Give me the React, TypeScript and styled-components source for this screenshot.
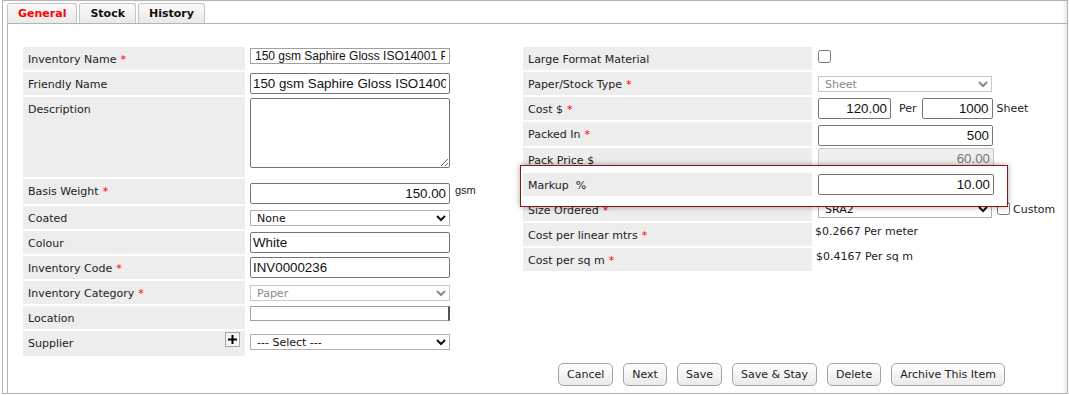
import styled, { createGlobalStyle } from "styled-components";

const GlobalStyle = createGlobalStyle`
  html, body {
    margin: 0;
    padding: 0;
    background: #fff;
  }
  body {
    font-family: "DejaVu Sans", Tahoma, sans-serif;
    font-size: 11px;
    color: #222;
  }
`;

const Frame = styled.div`
  box-sizing: border-box;
  width: 1066px;
  height: 394px;
  margin-left: 2px;
  border: 1px solid #b4b4b4;
  padding: 2px 0 0 4px;
  display: flex;
  flex-direction: column;
  box-shadow: inset -4px 0 5px -3px rgba(0, 0, 0, 0.15);
`;

const TabBar = styled.div`
  display: flex;
  gap: 2px;
  height: 20px;
`;

const Tab = styled.div<{ $active?: boolean }>`
  box-sizing: border-box;
  height: 20px;
  padding: 0 10px;
  display: flex;
  align-items: center;
  border: 1px solid #c4c4c4;
  border-bottom: none;
  border-radius: 3px 3px 0 0;
  background: linear-gradient(#fbfbfb, #e9e9e9);
  font-weight: bold;
  color: ${(p) => (p.$active ? "#f00" : "#111")};
`;

const Panel = styled.div`
  flex: 1;
  border-top: 1px solid #b4b4b4;
  border-left: 1px solid #b4b4b4;
  padding: 23px 0 0 15px;
  display: flex;
  flex-direction: column;
`;

const Columns = styled.div`
  display: flex;
`;

const Col = styled.div<{ $w: number }>`
  width: ${(p) => p.$w}px;
  display: flex;
  flex-direction: column;
  gap: 2px;
`;

const Row = styled.div<{ $label: number; $h?: number; $gap: number }>`
  display: grid;
  grid-template-columns: ${(p) => p.$label}px 1fr;
  column-gap: ${(p) => p.$gap}px;
  height: ${(p) => p.$h ?? 23}px;
`;

const HighlightRow = styled(Row)`
  position: relative;
  z-index: 1;

  &::before {
    content: "";
    position: absolute;
    z-index: -1;
    left: -3px;
    top: -8px;
    width: 486px;
    bottom: -11px;
    background: #fff;
    border: 1px solid #8f1515;
    box-shadow: 0 0 6px rgba(0, 0, 0, 0.35);
  }
`;

const Label = styled.div`
  box-sizing: border-box;
  background: #ededed;
  padding: 6px 5px 0;
  display: flex;
  justify-content: space-between;
  align-items: flex-start;
  white-space: pre;
`;

const Req = styled.span`
  color: #f00;
  margin-left: 4px;
`;

const Field = styled.div<{ $top?: number }>`
  display: flex;
  align-items: flex-start;
  padding-top: ${(p) => p.$top ?? 1}px;
  white-space: nowrap;
`;

const TextInput = styled.input<{ $w?: number; $right?: boolean }>`
  box-sizing: border-box;
  width: ${(p) => p.$w ?? 200}px;
  height: 21px;
  margin: 0;
  padding: 0 3px 0 2px;
  border: 1px solid #767676;
  border-radius: 2px;
  background: #fff;
  font-family: "Liberation Sans", Arial, sans-serif;
  font-size: 13.33px;
  color: #111;
  text-align: ${(p) => (p.$right ? "right" : "left")};
  outline: none;

  &:read-only {
    background: #efefef;
    border-color: #c8c8c8;
    color: #777;
  }
`;

const SlimInput = styled.input<{ $edge?: boolean }>`
  box-sizing: border-box;
  width: 200px;
  height: ${(p) => (p.$edge ? 15 : 16)}px;
  margin: 0;
  padding: 0 4px;
  border: 1px solid #a0a0a0;
  border-right: ${(p) => (p.$edge ? "2px solid #555" : "1px solid #a0a0a0")};
  border-radius: 0;
  font-family: "Liberation Sans", Arial, sans-serif;
  font-size: 12px;
  color: #111;
  outline: none;
`;

const TextArea = styled.textarea`
  box-sizing: border-box;
  width: 200px;
  height: 70px;
  margin: 0;
  border: 1px solid #767676;
  border-radius: 2px;
  font-family: "Liberation Sans", Arial, sans-serif;
  font-size: 13.33px;
  outline: none;
`;

const Select = styled.select<{ $w?: number; $h?: number }>`
  box-sizing: border-box;
  width: ${(p) => p.$w ?? 200}px;
  height: ${(p) => p.$h ?? 16}px;
  margin: 0;
  padding: 0 0 0 2px;
  border: 1px solid #b0b0b0;
  border-radius: 0;
  background-color: #fff;
  font-family: "DejaVu Sans", Tahoma, sans-serif;
  font-size: 11px;
  color: #111;

  &:disabled {
    color: #8a8a8a;
    border-color: #c8c8c8;
    opacity: 1;
  }
`;

const Check = styled.input<{ $ml?: number; $mt?: number }>`
  width: 13px;
  height: 13px;
  margin: ${(p) => p.$mt ?? 0}px 0 0 ${(p) => p.$ml ?? 0}px;
`;

const SmallUnit = styled.span`
  font-family: "Liberation Sans", Arial, sans-serif;
  font-size: 11px;
  margin: 1px 0 0 5px;
`;

const InlineText = styled.span<{ $ml: number; $mt?: number }>`
  margin-left: ${(p) => p.$ml}px;
  margin-top: ${(p) => p.$mt ?? 4}px;
`;

const PlusButton = styled.span`
  box-sizing: border-box;
  width: 15px;
  height: 15px;
  margin: -5px 0 0 0;
  border: 1px solid #a8a8a8;
  background: #f4f4f4;
  display: flex;
  align-items: center;
  justify-content: center;
`;

const ButtonRow = styled.div`
  display: flex;
  gap: 10px;
  margin: 7px 0 0 535px;
`;

const Button = styled.button`
  box-sizing: border-box;
  height: 23px;
  padding: 0 8px;
  border: 1px solid #a4a4a4;
  border-radius: 5px;
  background: linear-gradient(#ffffff, #eaeaea);
  font-family: "DejaVu Sans", Tahoma, sans-serif;
  font-size: 11px;
  color: #222;
`;

const Plus = () => (
  <svg width="9" height="9" viewBox="0 0 9 9">
    <rect x="3.5" y="0" width="2" height="9" fill="#000" />
    <rect x="0" y="3.5" width="9" height="2" fill="#000" />
  </svg>
);

const L = ({ text, req }: { text: string; req?: boolean }) => (
  <span>
    {text}
    {req && <Req>*</Req>}
  </span>
);

const App = () => {
  const left = { $label: 222, $gap: 5 };
  const right = { $label: 289, $gap: 6 };

  return (
    <>
      <GlobalStyle />
      <Frame>
        <TabBar>
          <Tab $active>General</Tab>
          <Tab>Stock</Tab>
          <Tab>History</Tab>
        </TabBar>
        <Panel>
          <Columns>
            <Col $w={500}>
              <Row {...left}>
                <Label><L text="Inventory Name" req /></Label>
                <Field>
                  <SlimInput defaultValue="150 gsm Saphire Gloss ISO14001 Paper" />
                </Field>
              </Row>
              <Row {...left}>
                <Label><L text="Friendly Name" /></Label>
                <Field>
                  <TextInput defaultValue="150 gsm Saphire Gloss ISO14001 Paper" />
                </Field>
              </Row>
              <Row {...left} $h={80}>
                <Label><L text="Description" /></Label>
                <Field>
                  <TextArea />
                </Field>
              </Row>
              <Row {...left} $h={25}>
                <Label><L text="Basis Weight" req /></Label>
                <Field $top={4}>
                  <TextInput $right defaultValue="150.00" />
                  <SmallUnit>gsm</SmallUnit>
                </Field>
              </Row>
              <Row {...left}>
                <Label><L text="Coated" /></Label>
                <Field $top={4}>
                  <Select defaultValue="None">
                    <option>None</option>
                  </Select>
                </Field>
              </Row>
              <Row {...left}>
                <Label><L text="Colour" /></Label>
                <Field>
                  <TextInput defaultValue="White" />
                </Field>
              </Row>
              <Row {...left}>
                <Label><L text="Inventory Code" req /></Label>
                <Field>
                  <TextInput defaultValue="INV0000236" />
                </Field>
              </Row>
              <Row {...left}>
                <Label><L text="Inventory Category" req /></Label>
                <Field $top={4}>
                  <Select disabled defaultValue="Paper">
                    <option>Paper</option>
                  </Select>
                </Field>
              </Row>
              <Row {...left}>
                <Label><L text="Location" /></Label>
                <Field $top={0}>
                  <SlimInput $edge />
                </Field>
              </Row>
              <Row {...left} $h={25}>
                <Label>
                  <L text="Supplier" />
                  <PlusButton><Plus /></PlusButton>
                </Label>
                <Field $top={3}>
                  <Select defaultValue="--- Select ---">
                    <option>--- Select ---</option>
                  </Select>
                </Field>
              </Row>
            </Col>

            <Col $w={540}>
              <Row {...right}>
                <Label><L text="Large Format Material" /></Label>
                <Field $top={3}>
                  <Check type="checkbox" />
                </Field>
              </Row>
              <Row {...right}>
                <Label><L text="Paper/Stock Type" req /></Label>
                <Field $top={4}>
                  <Select $w={174} disabled defaultValue="Sheet">
                    <option>Sheet</option>
                  </Select>
                </Field>
              </Row>
              <Row {...right}>
                <Label><L text="Cost $" req /></Label>
                <Field>
                  <TextInput $w={73} $right defaultValue="120.00" />
                  <InlineText $ml={8}>Per</InlineText>
                  <TextInput $w={71} $right defaultValue="1000" style={{ marginLeft: 5 }} />
                  <InlineText $ml={4}>Sheet</InlineText>
                </Field>
              </Row>
              <Row {...right} $h={24}>
                <Label><L text="Packed In" req /></Label>
                <Field $top={3}>
                  <TextInput $w={175} $right defaultValue="500" />
                </Field>
              </Row>
              <Row {...right}>
                <Label><L text="Pack Price $" /></Label>
                <Field $top={0}>
                  <TextInput $w={176} $right readOnly defaultValue="60.00" />
                </Field>
              </Row>
              <HighlightRow {...right}>
                <Label><L text="Markup  %" /></Label>
                <Field>
                  <TextInput $w={176} $right defaultValue="10.00" />
                </Field>
              </HighlightRow>
              <Row {...right}>
                <Label><L text="Size Ordered" req /></Label>
                <Field $top={3}>
                  <Select $w={174} $h={17} defaultValue="SRA2">
                    <option>SRA2</option>
                  </Select>
                  <Check type="checkbox" $ml={5} $mt={1} />
                  <InlineText $ml={3} $mt={2}>Custom</InlineText>
                </Field>
              </Row>
              <Row {...right}>
                <Label><L text="Cost per linear mtrs" req /></Label>
                <Field $top={2}>
                  <InlineText $ml={-3} $mt={0}>$0.2667 Per meter</InlineText>
                </Field>
              </Row>
              <Row {...right}>
                <Label><L text="Cost per sq m" req /></Label>
                <Field $top={2}>
                  <InlineText $ml={-2} $mt={0}>$0.4167 Per sq m</InlineText>
                </Field>
              </Row>
            </Col>
          </Columns>

          <ButtonRow>
            <Button>Cancel</Button>
            <Button>Next</Button>
            <Button>Save</Button>
            <Button>Save &amp; Stay</Button>
            <Button>Delete</Button>
            <Button>Archive This Item</Button>
          </ButtonRow>
        </Panel>
      </Frame>
    </>
  );
};

export default App;
